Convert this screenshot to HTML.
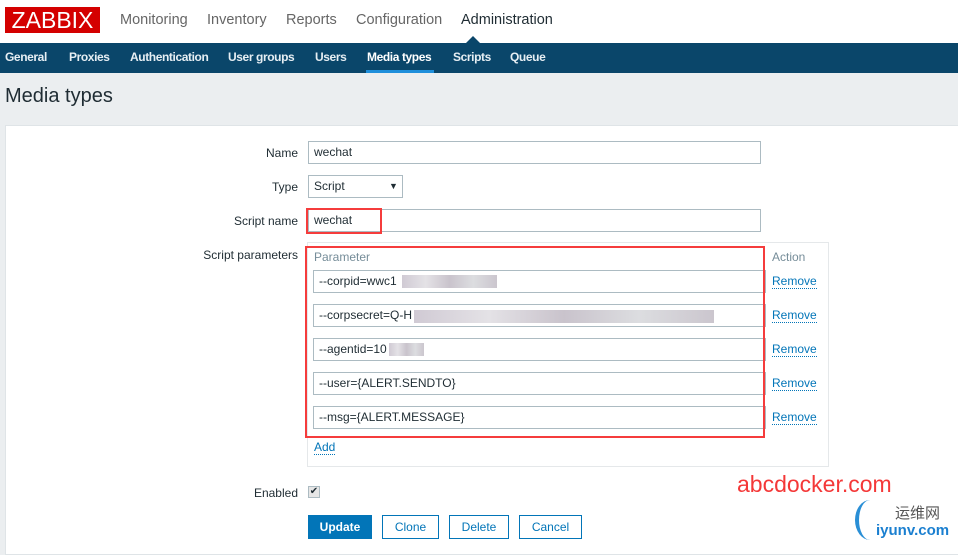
<!DOCTYPE html>
<html><head><meta charset="utf-8"><style>
*{margin:0;padding:0;box-sizing:border-box}
body{width:958px;height:547px;overflow:hidden;background:#ebeef0;font-family:"Liberation Sans",Arial,sans-serif;font-size:12px;color:#1f2c33;position:relative}
.a{position:absolute}
.top{left:0;top:0;width:958px;height:43px;background:#fff}
.logo{left:5px;top:7px;width:95px;height:26px;background:#d40000;color:#fff;font-size:23px;line-height:26px;text-align:center;letter-spacing:0px}
.mm{top:12px;font-size:14.5px;color:#666}
.nav{left:0;top:43px;width:958px;height:30px;background:#0a466a}
.sm{top:50px;font-size:12px;font-weight:bold;color:#e6eef3;letter-spacing:-0.4px}
.panel{left:5px;top:125px;width:960px;height:430px;background:#fff;border:1px solid #dfe4e7}
.lbl{font-size:12px;color:#1f2c33;text-align:right;width:120px}
.in{border:1px solid #acbbc2;background:#fff;height:23px;padding-left:5px;line-height:21px;font-size:12px}
.rm{left:772px;color:#0275b8;border-bottom:1px dotted #0275b8;line-height:13px}
.red{border:2px solid #f53c3c}
.btn{top:515px;height:24px;border:1px solid #0275b8;color:#0275b8;text-align:center;line-height:22px;background:#fff}
.blur{background:linear-gradient(90deg,#d0cad4,#e4e2e6,#c9c3cc,#dcdde0,#cbc6ce);height:13px}
</style></head><body>
<div class="a top"></div>
<div class="a logo">ZABBIX</div>
<div class="a mm" style="left:120px">Monitoring</div>
<div class="a mm" style="left:207px">Inventory</div>
<div class="a mm" style="left:286px">Reports</div>
<div class="a mm" style="left:356px">Configuration</div>
<div class="a mm" style="left:461px;color:#1f2c33">Administration</div>
<div class="a" style="left:466px;top:36px;width:0;height:0;border-left:7px solid transparent;border-right:7px solid transparent;border-bottom:7px solid #0a466a"></div>
<div class="a nav"></div>
<div class="a sm" style="left:5px">General</div>
<div class="a sm" style="left:69px">Proxies</div>
<div class="a sm" style="left:130px">Authentication</div>
<div class="a sm" style="left:228px">User groups</div>
<div class="a sm" style="left:315px">Users</div>
<div class="a sm" style="left:367px;color:#fff">Media types</div>
<div class="a" style="left:366px;top:70px;width:68px;height:3px;background:#1f8fdb"></div>
<div class="a sm" style="left:453px">Scripts</div>
<div class="a sm" style="left:510px">Queue</div>
<div class="a" style="left:5px;top:85px;font-size:20px;color:#1f2c33">Media types</div>
<div class="a panel"></div>
<div class="a lbl" style="left:178px;top:146px">Name</div>
<div class="a in" style="left:308px;top:141px;width:453px">wechat</div>
<div class="a lbl" style="left:178px;top:180px">Type</div>
<div class="a in" style="left:308px;top:175px;width:95px">Script<span style="position:absolute;left:80px;font-size:9px">▼</span></div>
<div class="a lbl" style="left:178px;top:214px">Script name</div>
<div class="a in" style="left:308px;top:209px;width:453px">wechat</div>
<div class="a red" style="left:306px;top:208px;width:76px;height:26px"></div>
<div class="a lbl" style="left:178px;top:248px">Script parameters</div>
<div class="a" style="left:307px;top:242px;width:522px;height:225px;border:1px solid #e5e8ea"></div>
<div class="a" style="left:314px;top:250px;color:#768d99">Parameter</div>
<div class="a" style="left:772px;top:250px;color:#768d99">Action</div>
<div class="a in" style="left:313px;top:270px;width:453px">--corpid=wwc1<span class="a blur" style="left:88px;top:4px;width:95px"></span></div>
<div class="a in" style="left:313px;top:304px;width:453px">--corpsecret=Q-H<span class="a blur" style="left:100px;top:5px;width:300px"></span></div>
<div class="a in" style="left:313px;top:338px;width:453px">--agentid=10<span class="a blur" style="left:75px;top:4px;width:35px"></span></div>
<div class="a in" style="left:313px;top:372px;width:453px">--user={ALERT.SENDTO}</div>
<div class="a in" style="left:313px;top:406px;width:453px">--msg={ALERT.MESSAGE}</div>
<div class="a rm" style="top:275px">Remove</div>
<div class="a rm" style="top:309px">Remove</div>
<div class="a rm" style="top:343px">Remove</div>
<div class="a rm" style="top:377px">Remove</div>
<div class="a rm" style="top:411px">Remove</div>
<div class="a red" style="left:305px;top:246px;width:460px;height:192px"></div>
<div class="a rm" style="left:314px;top:441px">Add</div>
<div class="a lbl" style="left:178px;top:486px">Enabled</div>
<div class="a" style="left:308px;top:486px;width:12px;height:12px;border:1px solid #acbbc2;background:#e6e6e6;font-size:10px;line-height:10px;text-align:center">✔</div>
<div class="a btn" style="left:308px;width:64px;background:#0275b8;color:#fff;font-weight:bold">Update</div>
<div class="a btn" style="left:382px;width:57px">Clone</div>
<div class="a btn" style="left:449px;width:60px">Delete</div>
<div class="a btn" style="left:519px;width:63px">Cancel</div>
<div class="a" style="left:737px;top:471px;font-size:23px;color:#f43838">abcdocker.com</div>
<div class="a" style="left:855px;top:500px;width:30px;height:40px;border-radius:50%;border-left:4px solid #2a8fd6"></div>
<div class="a" style="left:895px;top:502px;font-size:15px;color:#555;font-family:'Noto Sans CJK SC',sans-serif">运维网</div>
<div class="a" style="left:876px;top:522px;font-size:15px;color:#1a7fd0;font-weight:bold">iyunv.com</div>
</body></html>
